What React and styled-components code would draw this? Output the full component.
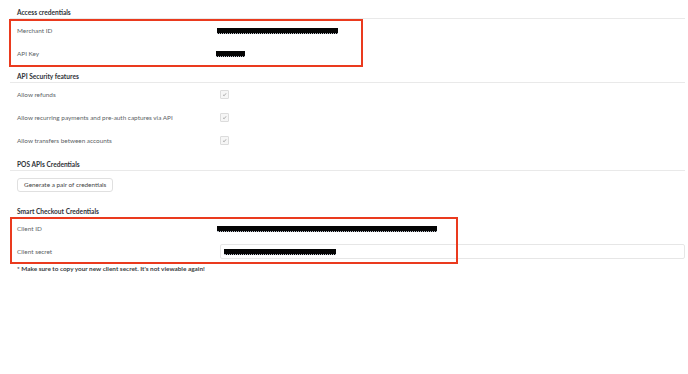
import React from 'react';
import styled, { createGlobalStyle } from 'styled-components';

// global
const GlobalStyle = createGlobalStyle`
    body {
        margin: 0;
        background: #fff;
        font-family: Lato, "Liberation Sans", Arial, sans-serif;
        color: #555;
    }
`;

// styled components
const Page = styled.div`
    position: relative;
    padding: 6px 3px 20px 10px;
    width: 688px;
    height: 374px;
    box-sizing: border-box;
`;

const Heading = styled.div`
    height: 12px;
    line-height: 12px;
    padding: 0 7px;
    margin-top: ${p => p.gap || 0}px;
    font-size: 6.6px;
    font-weight: 700;
    color: #2f3338;
    border-bottom: ${p => (p.noRule ? 'none' : '1px solid #e9e9e9')};
`;

const Row = styled.div`
    display: grid;
    grid-template-columns: 200px 1fr;
    align-items: center;
    height: 23px;
    padding-left: 7px;
`;

const Label = styled.span`
    font-size: 6.4px;
    color: #5b5f66;
`;

const Redacted = styled.span`
    display: block;
    width: ${p => p.w}px;
    height: 5px;
    background: #050505;
    border-bottom: 1px dotted #b9bec8;
    margin-left: ${p => p.offset || 0}px;
`;

const Check = styled.span`
    width: 7px;
    height: 7px;
    margin-left: 3px;
    border: 1px solid #dcdcdc;
    border-radius: 1px;
    background: #f6f6f6;
    display: flex;
    align-items: center;
    justify-content: center;
    svg {
        width: 5px;
        height: 5px;
    }
`;

const Input = styled.div`
    margin-left: 3px;
    height: 15px;
    border: 1px solid #e6e6e6;
    border-radius: 2px;
    display: flex;
    align-items: center;
    padding-left: 3px;
    box-sizing: border-box;
`;

const ButtonArea = styled.div`
    display: flex;
    align-items: flex-start;
    height: 14px;
    padding: 7px 7px 0;
`;

const Button = styled.button`
    height: 14px;
    margin: 0;
    padding: 0 6px;
    background: #fff;
    border: 1px solid #e0e0e0;
    border-radius: 3px;
    font-family: inherit;
    font-size: 6.4px;
    color: #444;
    line-height: 12px;
    cursor: pointer;
`;

const Note = styled.div`
    height: 11px;
    line-height: 11px;
    padding-left: 7px;
    font-size: 6.4px;
    font-weight: 700;
    color: #3a3d42;
`;

const Highlight = styled.div`
    position: absolute;
    left: ${p => p.x}px;
    top: ${p => p.y}px;
    width: ${p => p.w}px;
    height: ${p => p.h}px;
    border: 2px solid #ea3a1e;
    box-sizing: border-box;
    pointer-events: none;
`;

// presentational components
const Tick = () => (
    <svg viewBox="0 0 10 10" fill="none" stroke="#9a9a9a" strokeWidth="1.6">
        <path d="M2 5.5 L4.2 7.6 L8.2 2.6" />
    </svg>
);

const CheckRow = ({ label }) => (
    <Row>
        <Label>{label}</Label>
        <Check><Tick /></Check>
    </Row>
);

// container
export default function App() {
    return (
        <Page>
            <GlobalStyle />

            <Heading>Access credentials</Heading>
            <Row>
                <Label>Merchant ID</Label>
                <Redacted w={121} />
            </Row>
            <Row>
                <Label>API Key</Label>
                <Redacted w={29} offset={-1} />
            </Row>

            <Heading gap={5}>API Security features</Heading>
            <CheckRow label="Allow refunds" />
            <CheckRow label="Allow recurring payments and pre-auth captures via API" />
            <CheckRow label="Allow transfers between accounts" />

            <Heading gap={6}>POS APIs Credentials</Heading>
            <ButtonArea>
                <Button>Generate a pair of credentials</Button>
            </ButtonArea>

            <Heading gap={13} noRule>Smart Checkout Credentials</Heading>
            <Row>
                <Label>Client ID</Label>
                <Redacted w={220} />
            </Row>
            <Row>
                <Label>Client secret</Label>
                <Input>
                    <Redacted w={112} />
                </Input>
            </Row>
            <Note>* Make sure to copy your new client secret. It's not viewable again!</Note>

            <Highlight x={9} y={19} w={354} h={48} />
            <Highlight x={10} y={217} w={448} h={47} />
        </Page>
    );
}
